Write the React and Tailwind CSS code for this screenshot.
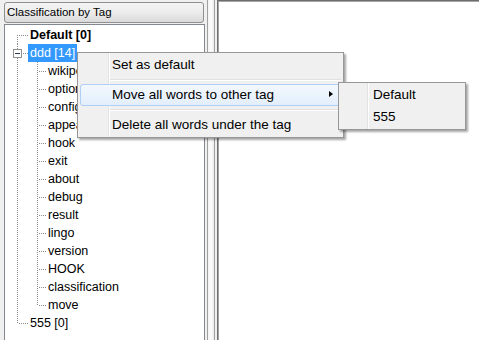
import React from 'react';

// tree data
const children = [
  'wikipedia', 'options', 'config', 'appearance', 'hook', 'exit', 'about', 'debug',
  'result', 'lingo', 'version', 'HOOK', 'classification', 'move',
];

const DOT = '#8c8c8c';

// root level connector (first / middle / last)
const RootGutter = ({ pos, expander }) => {
  const y1 = pos === 'first' ? 9 : 0;
  const y2 = pos === 'last' ? 10 : 18;
  return (
    <svg width="23" height="18" className="shrink-0" shapeRendering="crispEdges">
      {expander ? (
        <>
          <line x1="12.5" y1="0" x2="12.5" y2="5" stroke={DOT} strokeDasharray="1 1" />
          <line x1="12.5" y1="14" x2="12.5" y2="18" stroke={DOT} strokeDasharray="1 1" />
          <rect x="8.5" y="5.5" width="8" height="8" fill="#fdfdfd" stroke="#919191" />
          <line x1="10" y1="9.5" x2="15" y2="9.5" stroke="#2a3c57" />
          <line x1="18" y1="9.5" x2="23" y2="9.5" stroke={DOT} strokeDasharray="1 1" />
        </>
      ) : (
        <>
          <line x1="12.5" y1={y1} x2="12.5" y2={y2} stroke={DOT} strokeDasharray="1 1" />
          <line x1="14" y1="9.5" x2="23" y2="9.5" stroke={DOT} strokeDasharray="1 1" />
        </>
      )}
    </svg>
  );
};

const ChildGutter = ({ last }) => (
  <svg width="41" height="18" className="shrink-0" shapeRendering="crispEdges">
    <line x1="12.5" y1="0" x2="12.5" y2="18" stroke={DOT} strokeDasharray="1 1" />
    <line x1="32.5" y1="0" x2="32.5" y2={last ? 10 : 18} stroke={DOT} strokeDasharray="1 1" />
    <line x1="34" y1="9.5" x2="41" y2="9.5" stroke={DOT} strokeDasharray="1 1" />
  </svg>
);

const Label = ({ children, bold, selected }) => (
  <span
    className={
      'h-[18px] leading-[18px] px-[2px] text-[12.5px] whitespace-nowrap ' +
      (bold ? 'font-bold ' : '') +
      (selected ? 'bg-[#3399ff] text-white' : 'text-black')
    }
  >
    {children}
  </span>
);

const MenuItem = ({ children, hot, arrow }) => (
  <div
    className={
      'relative mx-[2px] h-[22px] flex items-center pl-[31px] text-[13.5px] text-black rounded-[3px] border ' +
      (hot
        ? 'border-[#aecff7] bg-gradient-to-b from-[#f3f8fe] to-[#e3eefb]'
        : 'border-transparent')
    }
  >
    <span className="whitespace-nowrap">{children}</span>
    {arrow && (
      <span className="absolute left-[248px] top-[6px] w-0 h-0 border-y-[3.5px] border-y-transparent border-l-[4px] border-l-black" />
    )}
  </div>
);

const Sep = () => (
  <div className="ml-[31px] mr-[2px] h-[8px] flex items-center">
    <div className="w-full border-t border-t-[#e0e0e0] border-b border-b-white" />
  </div>
);

export default function App() {
  return (
    <div className="relative w-[479px] h-[340px] overflow-hidden flex bg-[#f0f0f0] font-['Liberation_Sans',Arial,sans-serif]">
      {/* left side */}
      <div className="w-[205px] shrink-0 pl-[4px] pt-[2px] flex flex-col">
        <div className="w-[200px] h-[21px] rounded-[3px] border border-[#8e8f8f] bg-gradient-to-b from-[#f5f5f5] via-[#ececec] to-[#dadada] flex items-center pl-[2px] text-[11.5px] text-black">
          Classification by Tag
        </div>
        <div className="mt-[1px] w-[201px] flex-1 bg-white border border-b-0 border-[#828790] pt-[1px] flex flex-col">
          <div className="flex items-center h-[18px]">
            <RootGutter pos="first" />
            <Label bold>Default [0]</Label>
          </div>
          <div className="flex items-center h-[18px]">
            <RootGutter expander />
            <Label selected>ddd [14]</Label>
          </div>
          {children.map((c, i) => (
            <div key={c} className="flex items-center h-[18px]">
              <ChildGutter last={i === children.length - 1} />
              <Label>{c}</Label>
            </div>
          ))}
          <div className="flex items-center h-[18px]">
            <RootGutter pos="last" />
            <Label>555 [0]</Label>
          </div>
        </div>
      </div>

      {/* splitter */}
      <div className="w-[12px] shrink-0 px-[2px]">
        <div className="h-full border-x border-[#a0a0a0] bg-gradient-to-r from-[#f4f4f4] via-[#fcfcfc] to-[#ececec]" />
      </div>

      {/* right panel */}
      <div className="flex-1 bg-white border-t border-l border-[#6e6e6e] shadow-[inset_1px_1px_0_#a5a5a5]" />

      {/* context menu */}
      <div className="absolute left-[77px] top-[52px] w-[267px] border border-[#979797] bg-[#f0f0f0] py-[1px] shadow-[2px_2px_2px_rgba(0,0,0,0.35)]">
        <div className="absolute left-[30px] top-0 bottom-0 w-[2px] border-l border-l-[#e2e3e3] border-r border-r-white" />
        <MenuItem>Set as default</MenuItem>
        <Sep />
        <MenuItem hot arrow>Move all words to other tag</MenuItem>
        <Sep />
        <MenuItem>Delete all words under the tag</MenuItem>
      </div>

      {/* submenu */}
      <div className="absolute left-[338px] top-[82px] w-[128px] border border-[#979797] bg-[#f0f0f0] py-[1px] shadow-[2px_2px_2px_rgba(0,0,0,0.35)]">
        <div className="absolute left-[28px] top-0 bottom-0 w-[2px] border-l border-l-[#e2e3e3] border-r border-r-white" />
        <MenuItem>Default</MenuItem>
        <MenuItem>555</MenuItem>
      </div>
    </div>
  );
}
